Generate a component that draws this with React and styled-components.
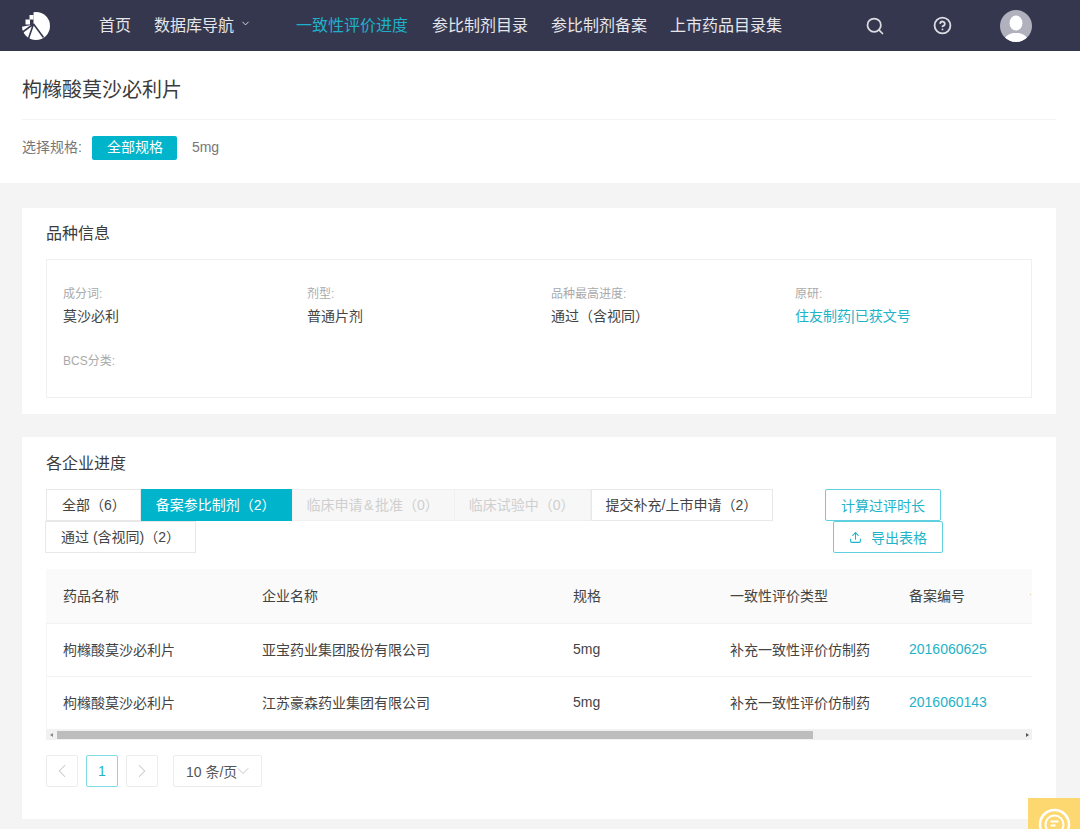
import React from "react";
import styled, { createGlobalStyle } from "styled-components";
import { ChevronDown, ChevronLeft, ChevronRight, Search, CircleHelp, Upload } from "lucide-react";

const Global = createGlobalStyle`
  html, body { margin: 0; padding: 0; height: 829px; overflow: hidden; }
  body {
    background: #f4f4f4;
    font-family: "Liberation Sans", "Noto Sans CJK SC", sans-serif;
    color: #444;
  }
  * { box-sizing: border-box; }
`;

const Page = styled.div`
  position: relative;
  width: 1080px;
  height: 829px;
  overflow: hidden;
`;

const NavBar = styled.header`
  height: 51px;
  background: #35374f;
  display: flex;
  align-items: center;
  padding-left: 22px;
`;

const LogoWrap = styled.div`
  width: 28px;
  height: 28px;
  margin-right: 49px;
  display: flex;
`;

const NavItem = styled.a`
  font-size: 16px;
  padding-bottom: 4px;
  color: ${(p) => (p.$active ? "#1fb0c9" : "#e6e6ea")};
  margin-right: ${(p) => p.$gap || 23}px;
  display: flex;
  align-items: center;
  white-space: nowrap;
`;

const NavIcons = styled.div`
  margin-left: 60px;
  display: flex;
  align-items: center;
  gap: 48px;
  color: #dcdde3;
`;

const Avatar = styled.div`
  width: 32px;
  height: 32px;
  border-radius: 50%;
  background: #b0b1bd;
  overflow: hidden;
`;

const TopPanel = styled.section`
  height: 132px;
  background: #fff;
  padding: 0 24px 0 22px;
`;

const DrugTitle = styled.h1`
  margin: 0;
  height: 69px;
  font-size: 20px;
  font-weight: 400;
  line-height: 79px;
  color: #3c3c3c;
  border-bottom: 1px solid #f3f3f3;
`;

const SpecRow = styled.div`
  display: flex;
  align-items: center;
  height: 24px;
  margin-top: 16px;
  font-size: 14px;
  color: #777;
`;

const SpecLabel = styled.span`
  height: 24px;
  line-height: 23px;
`;

const SpecTag = styled.span`
  height: 24px;
  line-height: 23px;
  font-size: 14px;
  border-radius: 2px;
  color: ${(p) => (p.$on ? "#fff" : "#777")};
  background: ${(p) => (p.$on ? "#00b4cb" : "transparent")};
  padding: ${(p) => (p.$on ? "0 14px 0 15px" : "0")};
  margin: ${(p) => (p.$on ? "0 15px 0 10px" : "0")};
`;

const Card = styled.section`
  background: #fff;
  margin: ${(p) => p.$top}px 24px 0 22px;
  padding: 0 24px;
  height: ${(p) => p.$h}px;
`;

const CardTitle = styled.h2`
  margin: 0;
  font-size: 16px;
  font-weight: 400;
  color: #3c3c3c;
  height: ${(p) => p.$h}px;
  line-height: ${(p) => p.$lh || p.$h}px;
`;

const InfoBox = styled.div`
  border: 1px solid #f0f0f0;
  height: 139px;
  padding: 27px 16px 0;
  display: grid;
  grid-template-columns: 244px 244px 244px 1fr;
  grid-auto-rows: 67px;
`;

const InfoLabel = styled.div`
  font-size: 12px;
  line-height: 14px;
  color: #aaa;
`;

const InfoValue = styled.div`
  font-size: 14px;
  line-height: 20px;
  margin-top: 5px;
  color: ${(p) => (p.$link ? "#22b3c8" : "#444")};
`;

const ProgressHead = styled.div`
  display: flex;
  height: 80px;
  margin-left: -1px;
`;

const Tabs = styled.div`
  width: 740px;
  display: flex;
  flex-wrap: wrap;
  align-content: flex-start;
`;

const Tab = styled.div`
  height: 32px;
  padding: 0 ${(p) => p.$pr || 15}px 0 ${(p) => p.$pl || 14}px;
  margin-left: ${(p) => p.$ml || 0}px;
  font-size: 14px;
  line-height: 31px;
  white-space: nowrap;
  border: 1px solid ${(p) => (p.$on ? "#00b4cb" : p.$off ? "#f0f0f0" : "#e8e8e8")};
  color: ${(p) => (p.$on ? "#fff" : p.$off ? "#cfcfcf" : "#444")};
  background: ${(p) => (p.$on ? "#00b4cb" : p.$off ? "#f7f7f7" : "#fff")};
`;

const Amp = styled.span`
  margin: 0 1.5px;
`;

const Actions = styled.div`
  width: 158px;
  display: flex;
  flex-direction: column;
  align-items: flex-end;
`;

const OutlineBtn = styled.button`
  height: 32px;
  font: inherit;
  font-size: 14px;
  color: #1fb4c8;
  background: #fff;
  border: 1px solid #5fd0df;
  border-radius: 2px;
  padding: 0;
  width: ${(p) => p.$w}px;
  margin-right: ${(p) => p.$mr || 0}px;
  display: flex;
  align-items: center;
  justify-content: center;
  gap: 9px;
`;

const TableWrap = styled.div`
  width: 100%;
  overflow: hidden;
`;

const Row = styled.div`
  display: grid;
  grid-template-columns: 199px 311px 157px 179px 121px 1fr;
  align-items: center;
  padding-left: ${(p) => (p.$head ? 17 : 16)}px;
  padding-bottom: 3px;
  height: ${(p) => (p.$head ? 55 : 53)}px;
  font-size: 14px;
  background: ${(p) => (p.$head ? "#fafafa" : "#fff")};
  border-bottom: 1px solid #f2f2f2;
  border-left: ${(p) => (p.$head ? "none" : "1px solid #f6f6f6")};
  color: #444;
`;

const LinkCell = styled.span`
  color: #22b3c8;
`;

const ClippedMark = styled.span`
  width: 1px;
  height: 1px;
  background: #e8c98a;
`;

const Scrollbar = styled.div`
  height: 10px;
  background: #f1f1f1;
  position: relative;
  display: flex;
  align-items: center;
`;

const ScrollThumb = styled.div`
  height: 8px;
  width: 756px;
  margin-left: 11px;
  background: #bdbdbd;
`;

const ScrollArrow = styled.span`
  position: absolute;
  top: 3px;
  ${(p) => (p.$right ? "right: 3px;" : "left: 4px;")}
  width: 0;
  height: 0;
  border-top: 2px solid transparent;
  border-bottom: 2px solid transparent;
  ${(p) => (p.$right ? "border-left: 3px solid #555;" : "border-right: 3px solid #888;")}
`;

const Pager = styled.div`
  display: flex;
  align-items: center;
  margin-top: 15px;
`;

const PageBtn = styled.div`
  width: 32px;
  height: 32px;
  border-radius: 2px;
  border: 1px solid ${(p) => (p.$on ? "#7fdbe6" : "#ececec")};
  color: ${(p) => (p.$on ? "#1fb4c8" : "#c4c4c4")};
  font-size: 14px;
  display: flex;
  align-items: center;
  justify-content: center;
  margin-right: 8px;
`;

const SizeSelect = styled.div`
  width: 89px;
  height: 32px;
  margin-left: 7px;
  border-radius: 2px;
  border: 1px solid #ececec;
  font-size: 14px;
  color: #555;
  display: flex;
  align-items: center;
  padding-left: 12px;
  white-space: nowrap;
  svg { margin-left: -4px; }
`;

const Fab = styled.div`
  position: absolute;
  right: 0;
  bottom: 0;
  width: 52px;
  height: 31px;
  background: #fdd871;
  overflow: hidden;
`;

const Logo = () => (
  <svg viewBox="0 0 28 28" width="28" height="28">
    <circle cx="14" cy="14" r="14" fill="#fff" />
    <path d="M-1-1H11.5V12.5L-1 15z" fill="#35374f" />
    <rect x="7.5" y="3" width="4" height="4.5" fill="#fff" />
    <rect x="3.5" y="7.5" width="4.5" height="5" fill="#fff" />
    <path d="M11.5 12L0 20.5M11.5 12L6 28M11.5 12L21.5 25.5" stroke="#35374f" strokeWidth="1.6" fill="none" />
  </svg>
);

const UserGlyph = () => (
  <svg viewBox="0 0 32 32" width="32" height="32">
    <ellipse cx="16" cy="13" rx="6.5" ry="7.5" fill="#fff" />
    <path d="M4 32c0-6 5-8 9-9h6c4 1 9 3 9 9z" fill="#fff" />
  </svg>
);

const FabGlyph = () => (
  <svg viewBox="0 0 52 31" width="52" height="31" fill="none" stroke="#fff">
    <circle cx="26.5" cy="26.5" r="14.5" strokeWidth="2.5" />
    <circle cx="26.5" cy="26.5" r="9" strokeWidth="2" />
    <path d="M22.5 23.5h8M22.5 27.5h5" strokeWidth="2" />
  </svg>
);

const rows = [
  ["枸橼酸莫沙必利片", "亚宝药业集团股份有限公司", "5mg", "补充一致性评价仿制药", "2016060625"],
  ["枸橼酸莫沙必利片", "江苏豪森药业集团有限公司", "5mg", "补充一致性评价仿制药", "2016060143"],
];

export default function App() {
  return (
    <Page>
      <Global />
      <NavBar>
        <LogoWrap><Logo /></LogoWrap>
        <NavItem>首页</NavItem>
        <NavItem $gap={45}>
          数据库导航
          <ChevronDown size={11} style={{ marginLeft: 6 }} />
        </NavItem>
        <NavItem $active $gap={24}>一致性评价进度</NavItem>
        <NavItem>参比制剂目录</NavItem>
        <NavItem>参比制剂备案</NavItem>
        <NavItem>上市药品目录集</NavItem>
        <NavIcons>
          <Search size={20} strokeWidth={2.1} />
          <CircleHelp size={19} strokeWidth={2.3} />
          <Avatar><UserGlyph /></Avatar>
        </NavIcons>
      </NavBar>

      <TopPanel>
        <DrugTitle>枸橼酸莫沙必利片</DrugTitle>
        <SpecRow>
          <SpecLabel>选择规格:</SpecLabel>
          <SpecTag $on>全部规格</SpecTag>
          <SpecTag>5mg</SpecTag>
        </SpecRow>
      </TopPanel>

      <Card $top={25} $h={206}>
        <CardTitle $h={51}>品种信息</CardTitle>
        <InfoBox>
          <div><InfoLabel>成分词:</InfoLabel><InfoValue>莫沙必利</InfoValue></div>
          <div><InfoLabel>剂型:</InfoLabel><InfoValue>普通片剂</InfoValue></div>
          <div><InfoLabel>品种最高进度:</InfoLabel><InfoValue>通过（含视同）</InfoValue></div>
          <div><InfoLabel>原研:</InfoLabel><InfoValue $link>住友制药|已获文号</InfoValue></div>
          <div><InfoLabel>BCS分类:</InfoLabel></div>
        </InfoBox>
      </Card>

      <Card $top={23} $h={382}>
        <CardTitle $h={52} $lh={54}>各企业进度</CardTitle>
        <ProgressHead>
          <Tabs>
            <Tab $pl={15} $pr={14} $ml={1}>全部（6）</Tab>
            <Tab $on>备案参比制剂（2）</Tab>
            <Tab $off>临床申请<Amp>&amp;</Amp>批准（0）</Tab>
            <Tab $off $ml={-1}>临床试验中（0）</Tab>
            <Tab>提交补充/上市申请（2）</Tab>
            <Tab $pl={15}>通过 (含视同)（2）</Tab>
          </Tabs>
          <Actions>
            <OutlineBtn $w={116} $mr={2}>计算过评时长</OutlineBtn>
            <OutlineBtn $w={110}><Upload size={13} />导出表格</OutlineBtn>
          </Actions>
        </ProgressHead>
        <TableWrap>
          <Row $head>
            <span>药品名称</span><span>企业名称</span><span>规格</span><span>一致性评价类型</span><span>备案编号</span><ClippedMark />
          </Row>
          {rows.map((r) => (
            <Row key={r[4]}>
              <span>{r[0]}</span><span>{r[1]}</span><span>{r[2]}</span><span>{r[3]}</span><LinkCell>{r[4]}</LinkCell>
            </Row>
          ))}
          <Scrollbar>
            <ScrollArrow />
            <ScrollThumb />
            <ScrollArrow $right />
          </Scrollbar>
        </TableWrap>
        <Pager>
          <PageBtn><ChevronLeft size={22} strokeWidth={1.1} /></PageBtn>
          <PageBtn $on>1</PageBtn>
          <PageBtn><ChevronRight size={22} strokeWidth={1.1} /></PageBtn>
          <SizeSelect>
            10 条/页
            <ChevronDown size={20} strokeWidth={1} color="#bbb" />
          </SizeSelect>
        </Pager>
      </Card>

      <Fab><FabGlyph /></Fab>
    </Page>
  );
}
